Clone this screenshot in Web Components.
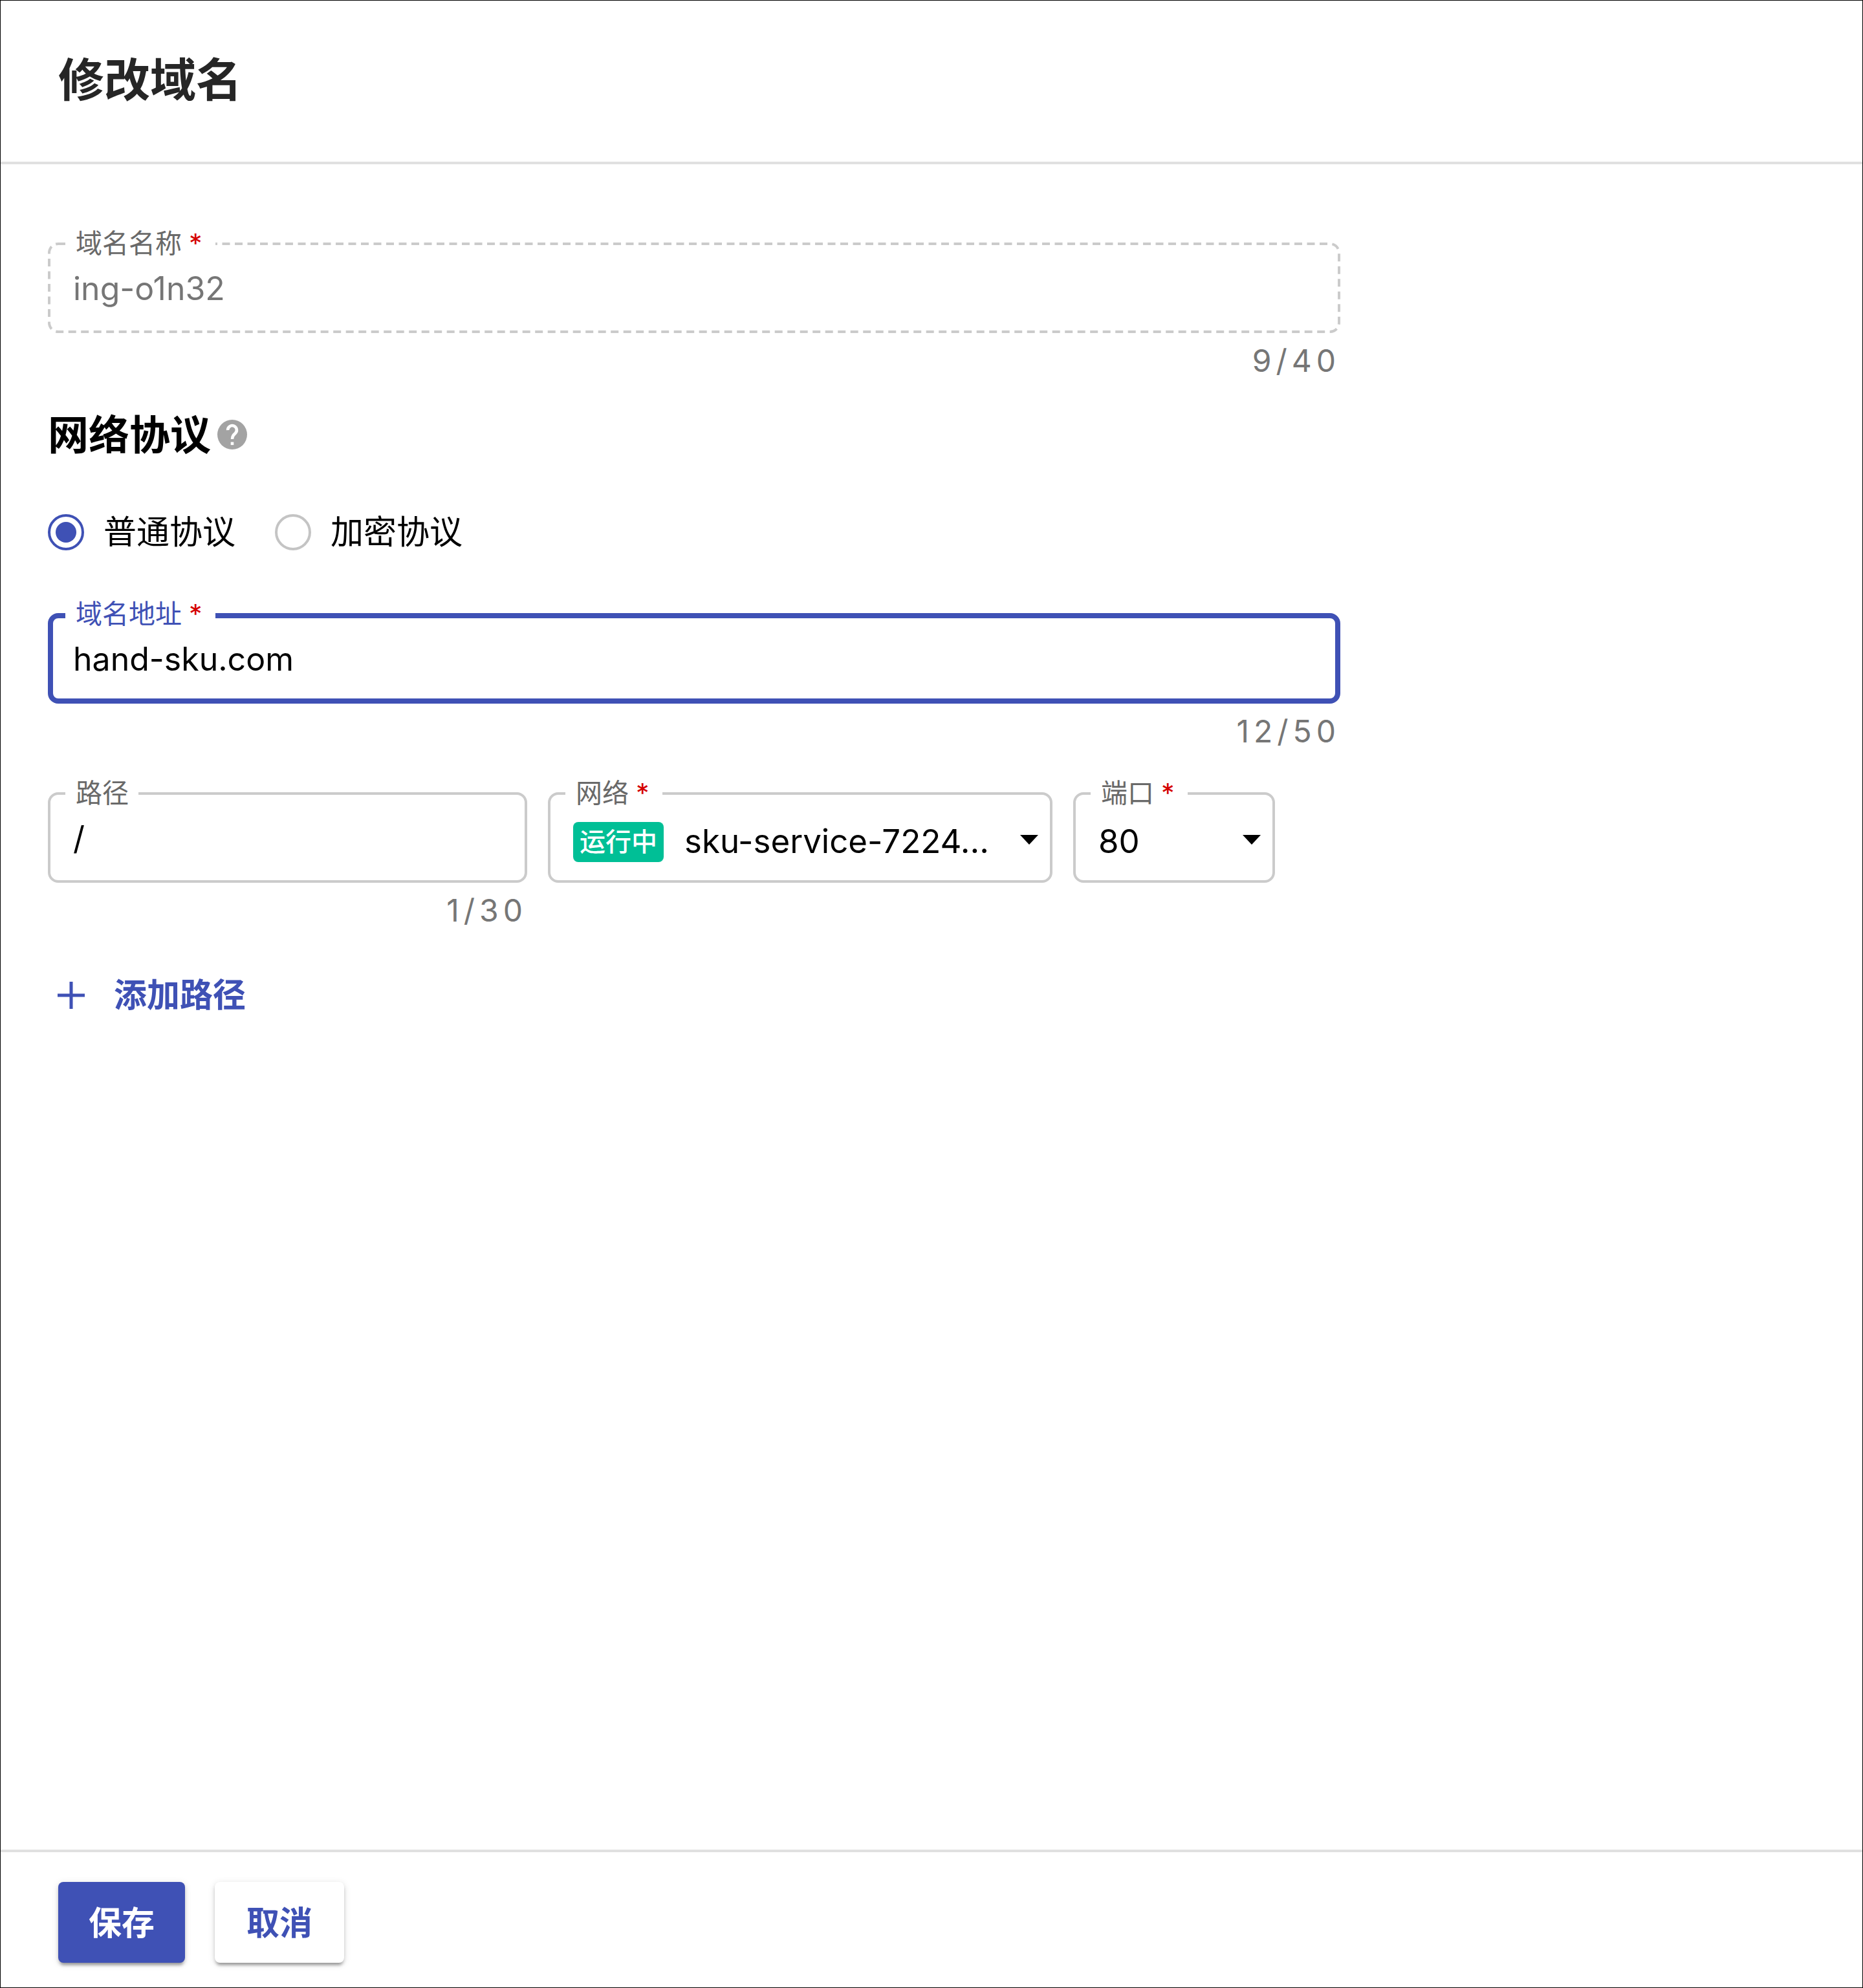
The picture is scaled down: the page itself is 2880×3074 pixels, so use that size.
<!DOCTYPE html>
<html lang="zh-CN">
<head>
<meta charset="utf-8">
<meta name="viewport" content="width=device-width, initial-scale=1">
<title>修改域名</title>
<style>
  :root {
    --primary: #3f51b5;
    --line: #cbcbcb;
    --divider: #e0e0e0;
    --muted: #767676;
    --required: #d50000;
    --success: #00bf96;
  }
  body {
    margin: 0;
    background: #fff;
    color: #000;
    font: 400 50px/60px Inter, "Noto Sans CJK SC", sans-serif;
  }
</style>
</head>
<body>
<side-panel heading="修改域名">
  <outlined-field label="域名名称" value="ing-o1n32" max="40" required disabled></outlined-field>
  <section-heading help="网络协议说明">网络协议</section-heading>
  <radio-choice name="protocol" options="普通协议,加密协议" selected="普通协议"></radio-choice>
  <outlined-field label="域名地址" value="hand-sku.com" max="50" required active></outlined-field>
  <path-row>
    <outlined-field label="路径" value="/" max="30"></outlined-field>
    <outlined-select label="网络" value="sku-service-7224..." required><status-tag>运行中</status-tag></outlined-select>
    <outlined-select label="端口" value="80" required></outlined-select>
  </path-row>
  <add-button>添加路径</add-button>
  <raised-button slot="actions" primary>保存</raised-button>
  <raised-button slot="actions">取消</raised-button>
</side-panel>

<script>
  const frame = `
    :host { display: block; width: 100%; max-width: 1998px; }
    .wrap { position: relative; }
    .box {
      box-sizing: border-box; height: 140px; display: flex; align-items: center;
      border: 4px solid var(--line); border-radius: 16px;
    }
    label {
      position: absolute; left: 27px; top: -19px; padding: 0 15px 0 16px;
      background: #fff; color: #696969; font-size: 41px; line-height: 40px; white-space: nowrap;
    }
    label span { color: var(--required); margin: 0 5px 0 11px; }
    input, select {
      appearance: none; border: 0; outline: 0; background: none; margin: 0; padding: 0;
      font: inherit; color: inherit; opacity: 1; min-width: 0; width: 100%; height: 60px;
    }`;

  const labelFor = (el) =>
    `<label for="control">${el.getAttribute('label')}${el.hasAttribute('required') ? '<span>*</span>' : ''}</label>`;

  class SidePanel extends HTMLElement {
    constructor() {
      super();
      this.attachShadow({ mode: 'open' }).innerHTML = `
        <style>
          :host { display: flex; flex-direction: column; box-sizing: border-box; min-height: 100vh; border: 1px solid #000; }
          header { padding: 86px 89px 91px; border-bottom: 4px solid var(--divider); }
          h1 { margin: 0; font-size: 71px; line-height: 72px; font-weight: 600; color: #262626; }
          main { flex: 1; padding: 121px 73px 60px; }
          footer { display: flex; gap: 46px; padding: 46px 89px 38px; border-top: 4px solid var(--divider); }
        </style>
        <header><h1>${this.getAttribute('heading')}</h1></header>
        <main><slot></slot></main>
        <footer><slot name="actions"></slot></footer>`;
    }
  }

  class OutlinedField extends HTMLElement {
    constructor() {
      super();
      const value = this.getAttribute('value');
      const disabled = this.hasAttribute('disabled');
      this.attachShadow({ mode: 'open' }).innerHTML = `
        <style>${frame}
          .box { padding: 2px 36px 0 35px; }
          :host([active]) .box { border: 8px solid var(--primary); padding: 2px 32px 0 31px; }
          :host([active]) label { color: var(--primary); }
          :host([disabled]) .box { border-color: transparent; color: var(--muted); }
          .dashes { position: absolute; inset: 0; width: 100%; height: 100%; pointer-events: none; }
          .dashes rect { x: 2px; y: 2px; width: calc(100% - 4px); height: calc(100% - 4px); fill: none; stroke: var(--line); stroke-width: 4px; stroke-dasharray: 12 7.5; }
          output { display: block; margin-top: 13px; text-align: right; color: var(--muted); font-size: 48px; line-height: 60px; letter-spacing: 7px; }
        </style>
        <div class="wrap">
          ${disabled ? '<svg class="dashes" aria-hidden="true"><rect rx="14"/></svg>' : ''}
          <div class="box"><input id="control" type="text" value="${value}" maxlength="${this.getAttribute('max')}" ${disabled ? 'disabled' : ''}></div>
          ${labelFor(this)}
        </div>
        <output for="control">${value.length}/${this.getAttribute('max')}</output>`;
      const input = this.shadowRoot.querySelector('input');
      input.addEventListener('input', () => {
        this.shadowRoot.querySelector('output').textContent = `${input.value.length}/${this.getAttribute('max')}`;
      });
    }
  }

  class OutlinedSelect extends HTMLElement {
    constructor() {
      super();
      this.attachShadow({ mode: 'open' }).innerHTML = `
        <style>${frame}
          .box { padding: 12px 18px 0 35px; }
          .pick { flex: 1; min-width: 0; display: grid; align-items: center; }
          .pick > * { grid-area: 1 / 1; }
          select { padding-right: 40px; font-size: 51px; }
          svg { justify-self: end; width: 28px; height: 20px; pointer-events: none; }
        </style>
        <div class="wrap">
          <div class="box">
            <slot></slot>
            <div class="pick">
              <select id="control"><option>${this.getAttribute('value')}</option></select>
              <svg viewBox="0 0 28 20" aria-hidden="true"><path d="M0 0h28L14 15z"/></svg>
            </div>
          </div>
          ${labelFor(this)}
        </div>`;
    }
  }

  class StatusTag extends HTMLElement {
    constructor() {
      super();
      this.attachShadow({ mode: 'open' }).innerHTML = `
        <style>
          :host { display: block; margin-right: 32px; margin-top: 2px; padding: 0 10px; border-radius: 8px; background: var(--success); color: #fff; font-size: 40px; line-height: 62px; font-weight: 500; white-space: nowrap; }
        </style><slot></slot>`;
    }
  }

  class SectionHeading extends HTMLElement {
    constructor() {
      super();
      this.attachShadow({ mode: 'open' }).innerHTML = `
        <style>
          :host { display: flex; align-items: center; gap: 10px; margin-top: 52px; }
          h2 { margin: 0; font-size: 63px; line-height: 64px; font-weight: 600; }
          svg { width: 46px; height: 46px; }
        </style>
        <h2><slot></slot></h2>
        <svg viewBox="2 2 20 20" role="img" aria-label="${this.getAttribute('help')}">
          <circle cx="12" cy="12" r="10" fill="#a3a3a3"/>
          <path d="M9 9a3 3 0 1 1 5.1 2.1c-1.2 1.1-2.1 1.9-2.1 3.9" fill="none" stroke="#fff" stroke-width="2"/>
          <path d="M11 17h2v2h-2z" fill="#fff"/>
        </svg>`;
    }
  }

  class RadioChoice extends HTMLElement {
    constructor() {
      super();
      const name = this.getAttribute('name');
      const selected = this.getAttribute('selected');
      const items = this.getAttribute('options').split(',').map((text) =>
        `<label><input type="radio" name="${name}" value="${text}" ${text === selected ? 'checked' : ''}>${text}</label>`).join('');
      this.attachShadow({ mode: 'open' }).innerHTML = `
        <style>
          :host { display: flex; gap: 61px; margin: 91px 0 97px; font-size: 51px; line-height: 56px; }
          label { display: flex; align-items: center; gap: 30px; }
          input { appearance: none; box-sizing: border-box; width: 56px; height: 56px; margin: 0; border: 4px solid #c4c4c4; border-radius: 50%; display: grid; place-items: center; }
          input:checked { border-color: var(--primary); }
          input:checked::before { content: ""; width: 32px; height: 32px; border-radius: 50%; background: var(--primary); }
        </style>${items}`;
    }
  }

  class PathRow extends HTMLElement {
    constructor() {
      super();
      this.attachShadow({ mode: 'open' }).innerHTML = `
        <style>
          :host { display: flex; align-items: flex-start; gap: 32px; margin-top: 64px; }
          ::slotted(*) { flex: 0 1 741px; min-width: 0; }
          ::slotted(:nth-child(2)) { flex-basis: 780px; }
          ::slotted(:nth-child(3)) { flex-basis: 312px; }
        </style><slot></slot>`;
    }
  }

  class AddButton extends HTMLElement {
    constructor() {
      super();
      this.attachShadow({ mode: 'open' }).innerHTML = `
        <style>
          :host { display: block; margin-top: 71px; }
          button { display: flex; align-items: center; gap: 45px; border: 0; background: none; padding: 0 15px; font: inherit; font-size: 51px; font-weight: 600; color: var(--primary); }
          svg { width: 42px; height: 42px; }
        </style>
        <button type="button">
          <svg viewBox="0 0 42 42" aria-hidden="true"><path d="M21 0v42M0 21h42" stroke="currentColor" stroke-width="5"/></svg>
          <slot></slot>
        </button>`;
    }
  }

  class RaisedButton extends HTMLElement {
    constructor() {
      super();
      this.attachShadow({ mode: 'open' }).innerHTML = `
        <style>
          :host { display: block; }
          button {
            display: block; height: 125px; padding: 2px 47px 0; border: 2px solid transparent; border-radius: 8px;
            background: #fff; color: var(--primary); font: inherit; font-size: 51px; font-weight: 600;
            box-shadow: 0 7px 4px -4px rgba(0,0,0,.24), 0 4px 5px rgba(0,0,0,.16), 0 2px 12px rgba(0,0,0,.12);
          }
          :host([primary]) button { border: 0; background: var(--primary); color: #fff; }
        </style>
        <button type="button"><slot></slot></button>`;
    }
  }

  customElements.define('side-panel', SidePanel);
  customElements.define('outlined-field', OutlinedField);
  customElements.define('outlined-select', OutlinedSelect);
  customElements.define('status-tag', StatusTag);
  customElements.define('section-heading', SectionHeading);
  customElements.define('radio-choice', RadioChoice);
  customElements.define('path-row', PathRow);
  customElements.define('add-button', AddButton);
  customElements.define('raised-button', RaisedButton);
</script>
</body>
</html>
